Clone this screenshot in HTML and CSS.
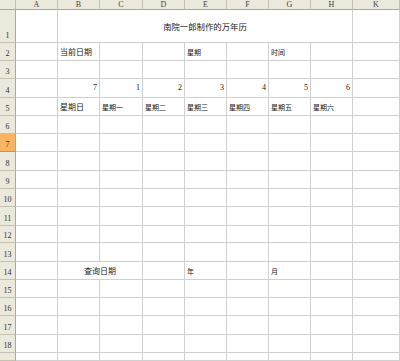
FILE: index.html
```html
<!DOCTYPE html>
<html lang="zh-cn">
<head>
  <meta charset="UTF-8">
  <title>万年历</title>
  <link rel="stylesheet" href="styles.css">
</head>
<body>
  <div class="sheet">
    <!-- column headers -->
    <div class="corner"></div>
    <div class="ch">A</div><div class="ch">B</div><div class="ch">C</div><div class="ch">D</div><div class="ch">E</div>
    <div class="ch">F</div><div class="ch">G</div><div class="ch">H</div><div class="ch">K</div>

    <!-- row 1 -->
    <div class="rh">1</div><div class="c"></div>
    <div class="c title span7">南院一郎制作的万年历</div>
    <div class="c"></div>

    <!-- row 2 -->
    <div class="rh">2</div><div class="c"></div>
    <div class="c big">当前日期</div><div class="c"></div><div class="c"></div>
    <div class="c small">星期</div><div class="c"></div>
    <div class="c small">时间</div><div class="c"></div><div class="c"></div>

    <!-- row 3 -->
    <div class="rh">3</div><div class="c"></div><div class="c"></div><div class="c"></div><div class="c"></div><div class="c"></div>
    <div class="c"></div><div class="c"></div><div class="c"></div><div class="c"></div>

    <!-- row 4 -->
    <div class="rh">4</div><div class="c"></div>
    <div class="c num">7</div><div class="c num">1</div><div class="c num">2</div><div class="c num">3</div>
    <div class="c num">4</div><div class="c num">5</div><div class="c num">6</div><div class="c"></div>

    <!-- row 5 -->
    <div class="rh">5</div><div class="c"></div>
    <div class="c big">星期日</div><div class="c small">星期一</div><div class="c small">星期二</div><div class="c small">星期三</div>
    <div class="c small">星期四</div><div class="c small">星期五</div><div class="c small">星期六</div><div class="c"></div>

    <div class="rh">6</div><div class="c"></div><div class="c"></div><div class="c"></div><div class="c"></div><div class="c"></div>
    <div class="c"></div><div class="c"></div><div class="c"></div><div class="c"></div>

    <div class="rh active">7</div><div class="c"></div><div class="c"></div><div class="c"></div><div class="c"></div><div class="c"></div>
    <div class="c"></div><div class="c"></div><div class="c"></div><div class="c"></div>

    <div class="rh">8</div><div class="c"></div><div class="c"></div><div class="c"></div><div class="c"></div><div class="c"></div>
    <div class="c"></div><div class="c"></div><div class="c"></div><div class="c"></div>

    <div class="rh">9</div><div class="c"></div><div class="c"></div><div class="c"></div><div class="c"></div><div class="c"></div>
    <div class="c"></div><div class="c"></div><div class="c"></div><div class="c"></div>

    <div class="rh">10</div><div class="c"></div><div class="c"></div><div class="c"></div><div class="c"></div><div class="c"></div>
    <div class="c"></div><div class="c"></div><div class="c"></div><div class="c"></div>

    <div class="rh">11</div><div class="c"></div><div class="c"></div><div class="c"></div><div class="c"></div><div class="c"></div>
    <div class="c"></div><div class="c"></div><div class="c"></div><div class="c"></div>

    <div class="rh">12</div><div class="c"></div><div class="c"></div><div class="c"></div><div class="c"></div><div class="c"></div>
    <div class="c"></div><div class="c"></div><div class="c"></div><div class="c"></div>

    <div class="rh">13</div><div class="c"></div><div class="c"></div><div class="c"></div><div class="c"></div><div class="c"></div>
    <div class="c"></div><div class="c"></div><div class="c"></div><div class="c"></div>

    <!-- row 14 -->
    <div class="rh">14</div><div class="c"></div>
    <div class="c big center span2">查询日期</div><div class="c"></div>
    <div class="c small">年</div><div class="c"></div>
    <div class="c small">月</div><div class="c"></div><div class="c"></div>

    <div class="rh">15</div><div class="c"></div><div class="c"></div><div class="c"></div><div class="c"></div><div class="c"></div>
    <div class="c"></div><div class="c"></div><div class="c"></div><div class="c"></div>

    <div class="rh">16</div><div class="c"></div><div class="c"></div><div class="c"></div><div class="c"></div><div class="c"></div>
    <div class="c"></div><div class="c"></div><div class="c"></div><div class="c"></div>

    <div class="rh">17</div><div class="c"></div><div class="c"></div><div class="c"></div><div class="c"></div><div class="c"></div>
    <div class="c"></div><div class="c"></div><div class="c"></div><div class="c"></div>

    <div class="rh">18</div><div class="c"></div><div class="c"></div><div class="c"></div><div class="c"></div><div class="c"></div>
    <div class="c"></div><div class="c"></div><div class="c"></div><div class="c"></div>

    <!-- row 19, only its top edge is in view -->
    <div class="rh"></div><div class="c"></div><div class="c"></div><div class="c"></div><div class="c"></div><div class="c"></div>
    <div class="c"></div><div class="c"></div><div class="c"></div><div class="c"></div>
  </div>
</body>
</html>
```

FILE: styles.css
```css
html, body {
  margin: 0;
  height: 361px;
  overflow: hidden;
  background-color: #fff;
}

.sheet {
  display: grid;
  grid-template-columns: 16px 42px 42px 43px 42px 42px 42px 42px 42px 1fr;
  grid-template-rows: 10px 33px 18px 18px 19px 18px 18px 18px 19px 18px 18px 19px 17px 19px 18px 18px 18px 19px 18px 8px;
  font-family: "Noto Sans CJK SC", "Liberation Sans", sans-serif;
  color: #222;
}

.corner,
.ch {
  box-sizing: border-box;
  background-color: #ebe9dc;
  border-right: 1px solid #c5c2b2;
  border-bottom: 1px solid #aca899;
}

.ch {
  display: flex;
  justify-content: center;
  align-items: center;
  font-family: "Liberation Serif", serif;
  font-size: 8px;
  color: #444;
}

.rh {
  box-sizing: border-box;
  background-color: #ebe9dc;
  border-right: 1px solid #aca899;
  border-bottom: 1px solid #c5c2b2;
  display: flex;
  justify-content: center;
  align-items: flex-end;
  font-family: "Liberation Serif", serif;
  font-size: 8px;
  line-height: 10px;
  padding-bottom: 1px;
  color: #333;
}

.rh.active {
  background-color: #f8b463;
  border-bottom-color: #d8902f;
}

.c {
  box-sizing: border-box;
  border-right: 1px solid #d0d0d0;
  border-bottom: 1px solid #d0d0d0;
  display: flex;
  align-items: flex-end;
  padding: 0 2px 3px 2px;
  white-space: nowrap;
  line-height: 10px;
}

.big {
  font-size: 8px;
}

.small {
  font-size: 7px;
}

.title {
  justify-content: center;
  align-items: center;
  padding-top: 2px;
  font-size: 8.4px;
}

.center {
  justify-content: center;
}

.num {
  justify-content: flex-end;
  font-family: "Liberation Serif", serif;
  font-size: 8px;
  padding-bottom: 4px;
}

.span7 {
  grid-column: span 7;
}

.span2 {
  grid-column: span 2;
}
```
